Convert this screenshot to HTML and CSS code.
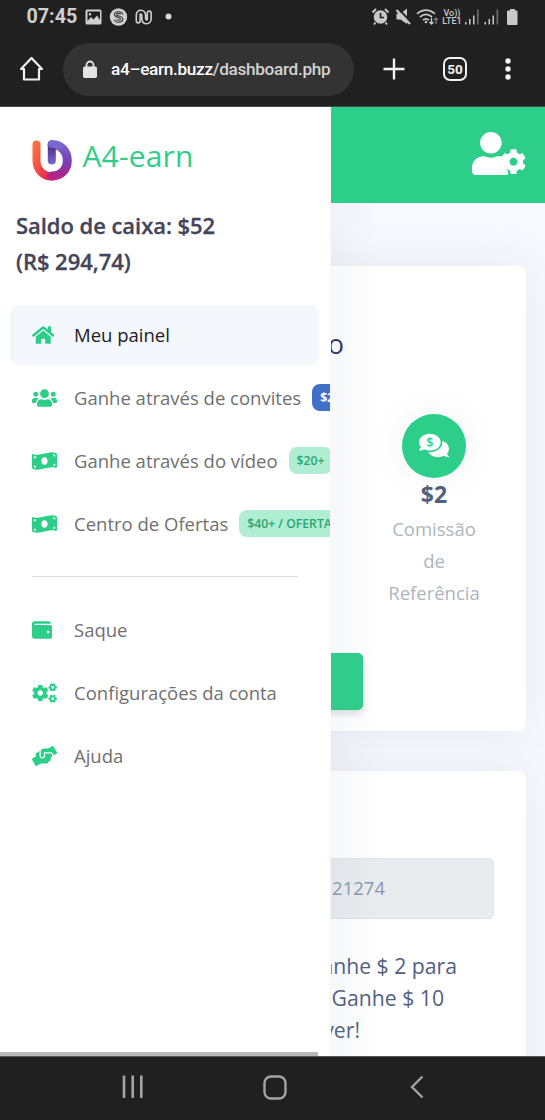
FILE: index.html
```html
<!DOCTYPE html>
<html lang="pt-BR">
<head>
<meta charset="utf-8">
<meta name="viewport" content="width=device-width, initial-scale=1">
<title>A4-earn</title>
<link rel="stylesheet" href="styles.css">
</head>
<body>
<svg class="defs" aria-hidden="true">
  <symbol id="gear" viewBox="0 0 512 512"><path d="M487.4 315.7l-42.6-24.6c4.3-23.2 4.3-47 0-70.2l42.6-24.6c4.9-2.8 7.1-8.6 5.5-14-11.1-35.6-30-67.8-54.7-94.6-3.8-4.1-10-5.1-14.8-2.3L380.8 110c-17.9-15.4-38.5-27.3-60.8-35.1V25.8c0-5.6-3.9-10.5-9.4-11.7-36.7-8.2-74.3-7.8-109.2 0-5.5 1.2-9.4 6.1-9.4 11.7V75c-22.2 7.9-42.8 19.8-60.8 35.1L88.7 85.5c-4.9-2.8-11-1.9-14.8 2.3-24.7 26.7-43.6 58.9-54.7 94.6-1.7 5.4.6 11.2 5.5 14L67.3 221c-4.3 23.2-4.3 47 0 70.2l-42.6 24.6c-4.9 2.8-7.1 8.6-5.5 14 11.1 35.6 30 67.8 54.7 94.6 3.8 4.1 10 5.1 14.8 2.3l42.6-24.6c17.9 15.4 38.5 27.3 60.8 35.1v49.2c0 5.6 3.9 10.5 9.4 11.7 36.7 8.2 74.3 7.8 109.2 0 5.5-1.2 9.4-6.1 9.4-11.7v-49.2c22.2-7.9 42.8-19.8 60.8-35.1l42.6 24.6c4.9 2.8 11 1.9 14.8-2.3 24.7-26.7 43.6-58.9 54.7-94.6 1.5-5.5-.7-11.3-5.6-14.1zM256 336c-44.1 0-80-35.9-80-80s35.9-80 80-80 80 35.9 80 80-35.900 80-80 80z"/></symbol>
  <symbol id="bill" viewBox="0 0 640 512"><path d="M621.16 54.46C582.37 38.19 543.55 32 504.75 32c-123.17-.01-246.33 62.34-369.5 62.34-30.89 0-61.76-3.92-92.65-13.72-3.47-1.1-6.95-1.62-10.35-1.62C15.04 79 0 92.32 0 110.81v317.26c0 12.63 7.23 24.6 18.84 29.46C57.63 473.81 96.45 480 135.25 480c123.17 0 246.34-62.35 369.51-62.35 30.89 0 61.76 3.92 92.65 13.72 3.47 1.1 6.95 1.62 10.35 1.62 17.21 0 32.25-13.32 32.25-31.81V83.93c-.01-12.64-7.24-24.6-18.85-29.47zM48 132.22c20.12 5.04 41.12 7.57 62.72 8.93C104.84 170.54 79 192.69 48 192.69v-60.47zm0 285v-47.78c34.37 0 62.18 27.27 63.71 61.4-22.53-1.81-43.59-6.31-63.71-13.62zM320 352c-44.19 0-80-42.99-80-96 0-53.02 35.82-96 80-96s80 42.98 80 96c0 53.03-35.83 96-80 96zm272 27.78c-17.52-4.39-35.71-6.85-54.32-8.44 5.87-26.08 27.5-45.88 54.32-49.28v57.72zm0-236.11c-30.89-3.91-54.86-29.7-55.81-61.55 19.54 2.17 38.09 6.23 55.81 12.66v48.89z"/></symbol>
</svg>
<div class="phone">
  <header class="browser">
    <div class="status">
      <span class="clock">07:45</span>
      <svg class="status-left" viewBox="0 0 90 20" width="90" height="20">
        <path fill="#cfcfcf" fill-rule="evenodd" d="M2 2.500h13a1.500 1.500 0 0 1 1.500 1.500v12a1.500 1.500 0 0 1-1.500 1.500H2A1.500 1.500 0 0 1 .5 16V4A1.500 1.500 0 0 1 2 2.500zm.5 2v9.500l3.500-4 2.500 2.500 3.500-4 3 4.500V4.500zM5 6a1.300 1.300 0 1 1 0 2.600A1.300 1.300 0 0 1 5 6z"/>
        <circle cx="33.500" cy="10" r="8.700" fill="#cfcfcf"/>
        <path fill="none" stroke="#333" stroke-width="1.100" d="M37.800 7.500c-.8-3.800-8.300-3.500-8.300 0 0 3.400 6 2.400 6 4.600 0 1.600-3.400 1.600-4 0M29.200 12.500c.8 3.800 8.600 3.500 8.600-.4 0-3.600-6.300-2.600-6.300-4.600 0-1.500 3.500-1.500 4.200 0"/>
        <path fill="none" stroke="#cfcfcf" stroke-width="5.400" stroke-linecap="round" stroke-linejoin="round" d="M53.200 14V8c0-4 5-3.500 5.500 0v4c.5 3.500 5.500 4 5.500 0V6"/>
        <path fill="none" stroke="#202020" stroke-width="2.200" stroke-linecap="round" stroke-linejoin="round" d="M53.200 14V8c0-4 5-3.500 5.500 0v4c.5 3.500 5.500 4 5.500 0V6"/>
        <circle cx="83.500" cy="9.500" r="3" fill="#d8d8d8"/>
      </svg>
      <div class="status-right">
        <svg viewBox="0 0 70 20" width="70" height="20" fill="none" stroke="#c9c9c9">
          <circle cx="9.500" cy="10" r="6" fill="#c9c9c9" stroke-width="1.500"/>
          <path stroke="#202020" stroke-width="1.600" d="M9.500 6v4.500H13"/>
          <path stroke-width="2" d="M1.500 5.500L5 2M17.500 5.500L14 2M4.500 15.500L3 17.500M14.500 15.500l1.500 2"/>
          <path fill="#c9c9c9" stroke="none" d="M25.500 6.500h4L36 1.500V17l-6.500-4.500h-4z"/>
          <path stroke="#202020" stroke-width="2" d="M27.500 2l13 13.500"/>
          <path stroke-width="2.200" d="M25.500 3l13.500 14"/>
          <path stroke-width="1.800" d="M46 6.800c5.500-5 12.500-5 18 0M49 10c4-3.500 8-3.500 12 0M52 13.200c2-1.800 4-1.800 6 0"/>
          <circle cx="55" cy="15" r="1.300" fill="#c9c9c9" stroke="none"/>
          <path stroke-width="1.300" d="M60.500 11v6M58.500 15l2 2 2-2"/>
          <path stroke="#777" stroke-width="1.300" d="M65 17v-6M63 13l2-2 2 2"/>
        </svg>
        <span class="lte"><span>Vo))</span><span>LTE1</span></span>
        <svg viewBox="0 0 56 20" width="56" height="20">
          <path fill="#c9c9c9" d="M1 15h1.500v2.500H1zM5 12h1.500v5.500H5zM9 8.500h1.500v9H9zM20.500 15H22v2.500h-1.500zM24.500 12H26v5.500h-1.500zM28.500 8.500H30v9h-1.500zM43 4.500q0-1 1-1h2V2h5v1.500h1.500q1 0 1 1v12.500q0 1-1 1H44q-1 0-1-1z"/>
          <path fill="#696969" d="M13 2.500h1.700v15H13zM32.500 2.500h1.700v15h-1.700z"/>
        </svg>
      </div>
    </div>
    <div class="toolbar">
      <svg class="home" viewBox="0 0 26 26" width="26" height="26" fill="none" stroke="#f1f1f1" stroke-width="2.200" stroke-linejoin="round"><path d="M2 13L12.500 2 23 13h-3v10.500H5V13z"/></svg>
      <div class="address">
        <svg viewBox="0 0 14 18" width="14" height="18"><path fill="none" stroke="#e4e4e4" stroke-width="1.800" d="M3.500 8V5a3.500 3.500 0 0 1 7 0v3"/><rect y="6.500" width="14" height="11.500" rx="1.800" fill="#e4e4e4"/></svg>
        <span class="url"><b>a4–earn.buzz</b>/dashboard.php</span>
      </div>
      <svg class="plus" viewBox="0 0 22 22" width="22" height="22"><path stroke="#f1f1f1" stroke-width="2.400" d="M11 .5v21M.5 11h21"/></svg>
      <span class="tabs">50</span>
      <svg class="dots" viewBox="0 0 6 22" width="6" height="22" fill="#f1f1f1"><circle cx="3" cy="3" r="2.700"/><circle cx="3" cy="11" r="2.700"/><circle cx="3" cy="19" r="2.700"/></svg>
    </div>
  </header>

  <div class="page">
    <main class="content">
      <div class="topbar">
        <svg viewBox="0 0 640 512" width="54" height="43.200">
          <path fill="#fff" d="M224 256c70.700 0 128-57.300 128-128S294.700 0 224 0 96 57.300 96 128s57.300 128 128 128zm89.600 32h-16.700c-22.200 10.200-46.900 16-72.900 16s-50.600-5.800-72.900-16h-16.700C60.200 288 0 348.200 0 422.400V464c0 26.500 21.500 48 48 48h352c10 0 20-3 27-8V300c-30-10-70-12-113.400-12z"/>
          <circle cx="494" cy="352" r="126" fill="#2dce89"/>
          <path fill="#fff" d="M330 289l52 10-6 35 22 36-18 38 24 46 26 50h-60z"/>
          <use href="#gear" x="340" y="200" width="304" height="304" fill="#fff"/>
        </svg>
      </div>
      <section class="card summary">
        <h2>o</h2>
        <div class="stat">
          <div class="bubble">
            <svg viewBox="0 0 576 512" width="30" height="27"><path fill="#fff" d="M416 192c0-88.400-93.100-160-208-160S0 103.600 0 192c0 34.300 14.100 65.900 38 92-13.400 30.200-35.500 54.200-35.800 54.500-2.200 2.300-2.800 5.700-1.500 8.700S4.800 352 8 352c36.600 0 66.900-12.300 88.700-25 32.200 15.700 70.300 25 111.300 25 114.900 0 208-71.600 208-160zm122 220c23.900-26 38-57.700 38-92 0-66.900-53.500-124.200-129.300-148.100.9 6.600 1.300 13.300 1.300 20.100 0 105.900-107.700 192-240 192-10.800 0-21.300-.8-31.700-1.900C207.800 439.600 281.800 480 368 480c41 0 79.100-9.200 111.300-25 21.800 12.700 52.100 25 88.700 25 3.200 0 6.100-1.900 7.300-4.800 1.300-2.900.7-6.300-1.500-8.700-.3-.3-22.400-24.200-35.800-54.500z"/><text class="coin" x="208" y="278" text-anchor="middle">$</text></svg>
          </div>
          <strong>$2</strong>
          <p>Comissão<br>de<br>Referência</p>
        </div>
        <div class="action"></div>
      </section>
      <section class="card referral">
        <div class="field">21274</div>
        <div class="offer"><p class="l1">Ganhe $ 2 para</p><p class="l2">Ganhe $ 10</p><p class="l3">ver!</p></div>
      </section>
    </main>

    <aside class="drawer">
      <div class="brand">
        <svg viewBox="0 0 40 41" width="40" height="41" fill="none" stroke-width="8" stroke-linecap="round">
          <defs>
            <linearGradient id="warm" x1="0" y1="0" x2="1" y2="1"><stop offset="0" stop-color="#f9703e"/><stop offset=".45" stop-color="#f34b45"/><stop offset="1" stop-color="#dc1e62"/></linearGradient>
            <linearGradient id="cool" gradientUnits="userSpaceOnUse" x1="26" y1="2" x2="20" y2="40"><stop offset="0" stop-color="#7868d2"/><stop offset=".5" stop-color="#7a3bb0"/><stop offset="1" stop-color="#c1207e"/></linearGradient>
            <linearGradient id="stem" gradientUnits="userSpaceOnUse" x1="20" y1="4" x2="20" y2="26"><stop offset="0" stop-color="#4b2380"/><stop offset="1" stop-color="#7c72d8"/></linearGradient>
          </defs>
          <path stroke="url(#warm)" d="M4.500 4.500v16c0 9 6.500 16 15.500 16"/>
          <path stroke="url(#cool)" stroke-width="9" d="M20 4.500c9 0 15.300 7 15.300 16S29 36 20 36"/>
          <path stroke="url(#stem)" d="M19.800 5v15.500"/>
          <path stroke="#7868d2" stroke-width="7" d="M19.500 4.200c3 0 5.500.8 7.500 1.800"/>
        </svg>
        <span>A4-earn</span>
      </div>
      <p class="balance">Saldo de caixa: $52<br>(R$ 294,74)</p>
      <nav class="menu">
        <a class="item active"><svg viewBox="0 0 576 512" width="22.500" height="20"><path d="M280.370 148.260L96 300.110V464a16 16 0 0 0 16 16l112.060-.29a16 16 0 0 0 15.920-16V368a16 16 0 0 1 16-16h64a16 16 0 0 1 16 16v95.640a16 16 0 0 0 16 16.050L464 480a16 16 0 0 0 16-16V300L295.670 148.260a12.190 12.190 0 0 0-15.300 0zM571.600 251.470L488 182.560V44.050a12 12 0 0 0-12-12h-56a12 12 0 0 0-12 12v72.610L318.470 43a48 48 0 0 0-61 0L4.340 251.470a12 12 0 0 0-1.600 16.900l25.500 31A12 12 0 0 0 45.150 301l235.220-193.740a12.190 12.190 0 0 1 15.300 0L530.900 301a12 12 0 0 0 16.900-1.600l25.500-31a12 12 0 0 0-1.700-16.930z"/></svg><span>Meu painel</span></a>
        <a class="item"><svg viewBox="0 0 640 512" width="25" height="20"><path d="M96 224c35.300 0 64-28.700 64-64s-28.700-64-64-64-64 28.700-64 64 28.700 64 64 64zm448 0c35.300 0 64-28.700 64-64s-28.700-64-64-64-64 28.700-64 64 28.700 64 64 64zm32 32h-64c-17.600 0-33.500 7.100-45.100 18.600 40.300 22.100 68.900 62 75.100 109.400h66c17.700 0 32-14.300 32-32v-32c0-35.300-28.700-64-64-64zm-256 0c61.900 0 112-50.100 112-112S381.900 32 320 32 208 82.100 208 144s50.100 112 112 112zm76.800 32h-8.300c-20.800 10-43.900 16-68.500 16s-47.600-6-68.500-16h-8.300C179.600 288 128 339.600 128 403.200V432c0 26.500 21.500 48 48 48h288c26.500 0 48-21.500 48-48v-28.800c0-63.600-51.600-115.200-115.200-115.200zm-223.700-13.400C161.500 263.100 145.600 256 128 256H64c-35.300 0-64 28.700-64 64v32c0 17.700 14.300 32 32 32h65.900c6.300-47.400 34.900-87.300 75.200-109.400z"/></svg><span>Ganhe através de convites</span><b class="badge blue">$2</b></a>
        <a class="item"><svg width="25" height="20"><use href="#bill"/></svg><span>Ganhe através do vídeo</span><b class="badge">$20+</b></a>
        <a class="item"><svg width="25" height="20"><use href="#bill"/></svg><span>Centro de Ofertas</span><b class="badge">$40+ / OFERTA</b></a>
        <hr>
        <a class="item"><svg viewBox="0 0 512 512" width="20" height="20"><path d="M461.200 128H80c-8.840 0-16-7.160-16-16s7.160-16 16-16h384c8.840 0 16-7.160 16-16 0-26.510-21.490-48-48-48H64C28.650 32 0 60.650 0 96v320c0 35.350 28.650 64 64 64h397.200c28.020 0 50.800-21.530 50.800-48V176c0-26.470-22.780-48-50.800-48zM416 336c-17.670 0-32-14.330-32-32s14.330-32 32-32 32 14.330 32 32-14.330 32-32 32z"/></svg><span>Saque</span></a>
        <a class="item"><svg viewBox="0 0 640 512" width="25" height="20"><use href="#gear" x="-8" y="36" width="440" height="440"/><use href="#gear" x="418" y="-2" width="224" height="224" transform="rotate(30 530 110)"/><use href="#gear" x="418" y="290" width="224" height="224" transform="rotate(30 530 402)"/></svg><span>Configurações da conta</span></a>
        <a class="item"><svg viewBox="0 0 640 512" width="25" height="20"><path d="M488 192H336v56c0 39.700-32.300 72-72 72s-72-32.300-72-72V126.400l-64.900 39C107.800 176.900 96 197.800 96 220.200v47.300l-80 46.200C.7 322.500-4.600 342.100 4.300 357.400l80 138.600c8.800 15.300 28.400 20.500 43.700 11.700L231.400 448H368c35.300 0 64-28.700 64-64h16c17.700 0 32-14.300 32-32v-64h8c13.300 0 24-10.700 24-24v-48c0-13.300-10.700-24-24-24zm147.700-37.400L555.700 16C546.900.7 527.300-4.500 512 4.300L408.600 64H306.400c-12 0-23.700 3.400-33.900 9.700L239 94.600c-9.400 5.800-15 16.100-15 27.100V248c0 22.100 17.900 40 40 40s40-17.900 40-40v-88h184c30.900 0 56 25.100 56 56v28.500l80-46.200c15.300-8.900 20.500-28.400 11.700-43.700z"/></svg><span>Ajuda</span></a>
      </nav>
      <div class="scrollbar"></div>
    </aside>
  </div>

  <footer class="navbar">
    <svg viewBox="0 0 22 24" width="22" height="24"><path stroke="#a3a3a3" stroke-width="2.600" d="M2 .5v22.500M10.700.5v22.500M19.300.5v22.500"/></svg>
    <svg viewBox="0 0 24 25" width="24" height="25" fill="none"><rect x="1.500" y="1.500" width="21" height="22" rx="6.500" stroke="#a3a3a3" stroke-width="2.400"/></svg>
    <svg viewBox="0 0 14 24" width="14" height="24" fill="none"><path stroke="#a3a3a3" stroke-width="2.400" d="M12.500 1.500L2 12l10.500 10.500"/></svg>
  </footer>
</div>
</body>
</html>
```
FILE: styles.css
```css
* { box-sizing: border-box; }
body { margin: 0; font-family: "Open Sans", "Noto Sans", sans-serif; }
p, h2 { margin: 0; }
svg { display: block; flex: none; }
.defs { position: absolute; width: 0; height: 0; }

.phone { display: flex; flex-direction: column; width: 545px; height: 1120px; overflow: hidden; background: #202020; }

/* Browser chrome */
.browser { height: 107px; border-bottom: 1px solid #4a4a4a; font-family: Roboto, sans-serif; }
.status { display: flex; align-items: center; height: 34px; padding: 0 25px 0 26.500px; }
.clock { width: 58.500px; font-size: 19.700px; font-weight: 700; line-height: 34px; color: #cfcfcf; }
.status-right { display: flex; align-items: center; margin-left: auto; }
.lte { display: flex; flex-direction: column; width: 22px; margin-right: 1px; font-size: 9px; font-weight: 500; line-height: 8.500px; color: #c9c9c9; white-space: nowrap; text-align: center; }
.toolbar { display: flex; align-items: center; height: 70px; padding-left: 19px; }
.address { display: flex; align-items: center; gap: 14px; width: 291px; height: 53px; margin-left: 18px; padding-left: 20px; border-radius: 27px; background: #333; }
.url { font-size: 17.200px; font-weight: 500; letter-spacing: -.31px; color: #d2d2d2; white-space: nowrap; }
.url b { font-weight: 500; color: #fff; }
.plus { margin-left: 29px; }
.tabs { width: 24px; height: 24px; margin-left: 38px; border: 2.500px solid #f1f1f1; border-radius: 7px; font-size: 13.500px; font-weight: 700; line-height: 20px; text-align: center; color: #f1f1f1; }
.dots { margin-left: 38px; }

/* Page */
.page { position: relative; height: 949px; overflow: hidden; background: #f8f9fe; }
.content { display: flex; flex-direction: column; }
.topbar { display: flex; justify-content: flex-end; height: 96px; padding: 25px 19px 0 0; background: #2dce89; }
.card { width: 506px; margin-left: 20px; border-radius: 8px; background: #fff; box-shadow: 0 0 42px rgba(136, 152, 170, .17); }
.summary { height: 465px; margin-top: 63px; padding-top: 58px; }
.summary h2 { padding-right: 182px; font-size: 27px; font-weight: 400; line-height: 40px; text-align: right; color: #32325d; }
.stat { display: flex; flex-direction: column; align-items: center; width: 140px; margin: 49.500px 0 0 344px; }
.bubble { display: flex; align-items: center; justify-content: center; width: 64px; height: 64px; border-radius: 50%; background: #2dce89; box-shadow: 0 0 32px rgba(136, 152, 170, .12); }
.coin { font: 600 240px "Open Sans", sans-serif; fill: #2dce89; }
.stat strong { height: 35px; font-size: 23px; line-height: 33px; color: #525f7f; }
.stat p { font-size: 18.500px; line-height: 32px; text-align: center; color: #adb5bd; }
.action { width: 163px; height: 57px; margin: 44.500px 0 0 180px; border-radius: 5px; background: #2dce89; box-shadow: 0 4px 6px rgba(50, 50, 93, .16); }
.referral { height: 400px; margin-top: 40px; padding: 87px 32px 0; }
.field { height: 61px; padding-right: 108px; border: 1px solid #dee2e6; border-radius: 5px; background: #e9ecef; font-size: 18.500px; line-height: 58px; text-align: right; color: #8898aa; }
.offer { padding-top: 31px; font-size: 21.200px; line-height: 32px; text-align: right; color: #525f7f; }
.l1 { padding-right: 37px; }
.l2 { padding-right: 50px; }
.l3 { padding-right: 134px; }

/* Drawer */
.drawer { position: absolute; left: 0; top: 0; display: flex; flex-direction: column; width: 331px; height: 949px; overflow: hidden; background: #fff; border-right: 1px solid #f6f6f7; }
.page::after { content: ""; position: absolute; left: 331px; top: 96px; width: 50px; height: 853px; background: linear-gradient(90deg, rgba(136, 152, 170, .07), rgba(136, 152, 170, 0)); }
.brand { display: flex; gap: 11px; height: 103px; padding: 33px 0 0 31.500px; }
.brand span { font-size: 30px; font-weight: 500; line-height: 31px; letter-spacing: .15px; color: #2dce89; white-space: nowrap; }
.balance { height: 95px; padding-left: 16px; font-size: 22px; font-weight: 600; line-height: 35.500px; letter-spacing: -.05px; color: #45455a; margin-top: -2px; margin-bottom: 2px; -webkit-text-stroke: .3px #45455a; }
.menu { display: flex; flex-direction: column; gap: 3px; padding-left: 10px; }
.item { display: flex; flex: none; align-items: center; width: 309px; height: 60px; padding-left: 21.500px; border-radius: 8px; color: #707070; font-size: 18.500px; white-space: nowrap; }
.item svg { fill: #2dce89; }
.item span { flex: none; padding-bottom: 2px; }
.item svg + span { margin-left: 17.500px; }
.item svg[width="22.500"] + span { margin-left: 20px; }
.item svg[width="20"] + span { margin-left: 22.500px; }
.active { background: #f4f8fc; color: #202028; }
.badge { flex: none; height: 27px; margin: 0 0 1px 11px; padding: 0 8px; border-radius: 8px; background: #b0eed3; font-size: 12.200px; font-weight: 600; line-height: 27px; color: #2aa572; }
.blue { background: #4170c8; color: #fff; font-weight: 700; }
.menu hr { width: 266px; height: 1px; margin: 19px 0 20px 22px; border: 0; background: #dcdcdc; }
.scrollbar { width: 318px; height: 4px; margin-top: auto; background: #b8b8b8; }

/* Android navigation */
.navbar { display: flex; align-items: center; height: 64px; padding: 0 0 3px 122px; border-top: 1px solid #555; }
.navbar svg + svg { margin-left: 118.500px; }
.navbar svg:last-child { margin-left: 123px; }
```
